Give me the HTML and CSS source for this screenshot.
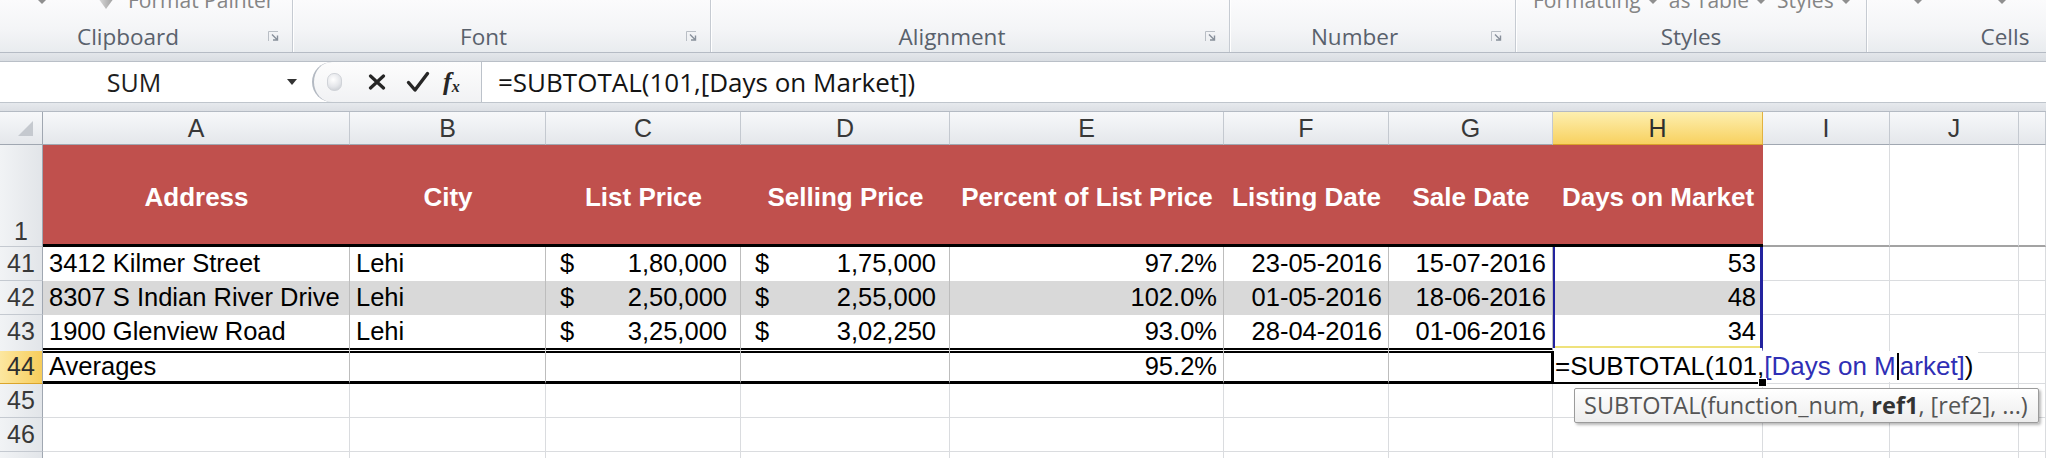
FILE: index.html
```html
<!DOCTYPE html>
<html>
<head>
<meta charset="utf-8">
<title>Excel - Averages</title>
<link rel="stylesheet" href="styles.css">
</head>
<body>
<div class="app">
  <div class="ribbon">
    <div class="group g-clip">
      <div class="gtop">
        <span class="dd"></span>
        <svg class="brush" width="18" height="22" viewBox="0 0 18 22"><defs><linearGradient id="bg1" x1="0" x2="1" y1="0" y2="0"><stop offset="0" stop-color="#dcdcdc"/><stop offset="1" stop-color="#9c9c9c"/></linearGradient></defs><path d="M1 10 L9 3 L17 10 L9 21 Z" fill="url(#bg1)"/></svg>
        <span class="gt fp">Format Painter</span>
      </div>
      <div class="glabel"><span class="lbl">Clipboard</span><span class="launch"><svg width="14" height="13" viewBox="0 0 14 13"><path d="M1.5 11 V1.5 H11" fill="none" stroke="#b9bec5"/><path d="M5 4.5 L10 9.5 M6 10 H10.5 V5.5" fill="none" stroke="#88909b" stroke-width="1.4"/></svg></span></div>
    </div>
    <div class="group g-font">
      <div class="gtop"></div>
      <div class="glabel"><span class="lbl">Font</span><span class="launch"><svg width="14" height="13" viewBox="0 0 14 13"><path d="M1.5 11 V1.5 H11" fill="none" stroke="#b9bec5"/><path d="M5 4.5 L10 9.5 M6 10 H10.5 V5.5" fill="none" stroke="#88909b" stroke-width="1.4"/></svg></span></div>
    </div>
    <div class="group g-align">
      <div class="gtop"></div>
      <div class="glabel"><span class="lbl">Alignment</span><span class="launch"><svg width="14" height="13" viewBox="0 0 14 13"><path d="M1.5 11 V1.5 H11" fill="none" stroke="#b9bec5"/><path d="M5 4.5 L10 9.5 M6 10 H10.5 V5.5" fill="none" stroke="#88909b" stroke-width="1.4"/></svg></span></div>
    </div>
    <div class="group g-num">
      <div class="gtop"></div>
      <div class="glabel"><span class="lbl">Number</span><span class="launch"><svg width="14" height="13" viewBox="0 0 14 13"><path d="M1.5 11 V1.5 H11" fill="none" stroke="#b9bec5"/><path d="M5 4.5 L10 9.5 M6 10 H10.5 V5.5" fill="none" stroke="#88909b" stroke-width="1.4"/></svg></span></div>
    </div>
    <div class="group g-styles">
      <div class="gtop">
        <span class="gt">Formatting</span><span class="dd"></span>
        <span class="gt">as Table</span><span class="dd"></span>
        <span class="gt">Styles</span><span class="dd"></span>
      </div>
      <div class="glabel"><span class="lbl">Styles</span></div>
    </div>
    <div class="group g-cells">
      <div class="gtop"><span class="dd"></span><span class="dd dd2"></span></div>
      <div class="glabel"><span class="lbl">Cells</span></div>
    </div>
  </div>
  <div class="band"></div>
  <div class="fbar">
    <div class="namebox"><span class="nb-text">SUM</span><span class="nb-arrow"></span></div>
    <div class="fcap">
      <span class="grip"></span>
      <svg class="ico-x" width="18" height="16" viewBox="0 0 18 16"><path d="M2.5 2 L15.5 14 M15.5 2 L2.5 14" stroke="#262626" stroke-width="3.2" stroke-linecap="round"/></svg>
      <svg class="ico-ok" width="24" height="22" viewBox="0 0 24 22"><path d="M2.5 11.5 L9 19 L21.5 2.5" fill="none" stroke="#262626" stroke-width="3.4" stroke-linecap="round" stroke-linejoin="round"/></svg>
      <span class="fx">f<sub>x</sub></span>
    </div>
    <div class="finput">=SUBTOTAL(101,[Days on Market])</div>
  </div>
  <div class="band2"></div>

  <div class="sheet">
    <div class="row hdr">
      <div class="corner"><span class="tri"></span></div>
      <div>A</div><div>B</div><div>C</div><div>D</div><div>E</div><div>F</div><div>G</div>
      <div class="sel">H</div><div>I</div><div>J</div><div></div>
    </div>

    <div class="row r1">
      <div class="rh rh1">1</div>
      <div class="th">Address</div>
      <div class="th">City</div>
      <div class="th">List Price</div>
      <div class="th">Selling Price</div>
      <div class="th">Percent of List Price</div>
      <div class="th">Listing Date</div>
      <div class="th">Sale Date</div>
      <div class="th">Days on Market</div>
      <div class="blank"></div><div class="blank"></div><div class="blank"></div>
    </div>

    <div class="row rd">
      <div class="rh">41</div>
      <div class="t">3412 Kilmer Street</div>
      <div class="t">Lehi</div>
      <div class="t acc"><span>$</span><span>1,80,000</span></div>
      <div class="t acc"><span>$</span><span>1,75,000</span></div>
      <div class="t num">97.2%</div>
      <div class="t num">23-05-2016</div>
      <div class="t num">15-07-2016</div>
      <div class="t num ref">53</div>
      <div></div><div></div><div></div>
    </div>

    <div class="row rd band42">
      <div class="rh">42</div>
      <div class="t">8307 S Indian River Drive</div>
      <div class="t">Lehi</div>
      <div class="t acc"><span>$</span><span>2,50,000</span></div>
      <div class="t acc"><span>$</span><span>2,55,000</span></div>
      <div class="t num">102.0%</div>
      <div class="t num">01-05-2016</div>
      <div class="t num">18-06-2016</div>
      <div class="t num ref">48</div>
      <div></div><div></div><div></div>
    </div>

    <div class="row rd r43">
      <div class="rh">43</div>
      <div class="t">1900 Glenview Road</div>
      <div class="t">Lehi</div>
      <div class="t acc"><span>$</span><span>3,25,000</span></div>
      <div class="t acc"><span>$</span><span>3,02,250</span></div>
      <div class="t num">93.0%</div>
      <div class="t num">28-04-2016</div>
      <div class="t num">01-06-2016</div>
      <div class="t num ref last">34</div>
      <div></div><div></div><div></div>
    </div>

    <div class="row r44">
      <div class="rh sel">44</div>
      <div class="t">Averages</div>
      <div class="t"></div>
      <div class="t"></div>
      <div class="t"></div>
      <div class="t num">95.2%</div>
      <div class="t"></div>
      <div class="t"></div>
      <div class="active">
        <span class="edit">=SUBTOTAL(101,<span class="blue">[Days on M<span class="caret"></span>arket]</span>)</span>
        <span class="fillh"></span>
        <div class="tip">SUBTOTAL(function_num, <b>ref1</b>, [ref2], ...)</div>
      </div>
      <div></div><div></div><div></div>
    </div>

    <div class="row re">
      <div class="rh">45</div>
      <div></div><div></div><div></div><div></div><div></div><div></div><div></div><div></div><div></div><div></div><div></div>
    </div>
    <div class="row re">
      <div class="rh">46</div>
      <div></div><div></div><div></div><div></div><div></div><div></div><div></div><div></div><div></div><div></div><div></div>
    </div>
    <div class="row re">
      <div class="rh">47</div>
      <div></div><div></div><div></div><div></div><div></div><div></div><div></div><div></div><div></div><div></div><div></div>
    </div>
  </div>
</div>
</body>
</html>
```

FILE: styles.css
```css
html, body {
  margin: 0;
  padding: 0;
  background: #ffffff;
}
body {
  width: 2046px;
  height: 458px;
  overflow: hidden;
  font-family: "Liberation Sans", Arial, sans-serif;
}
.app {
  width: 2046px;
  height: 458px;
  overflow: hidden;
}

/* ---------- Ribbon ---------- */
.ribbon {
  display: flex;
  height: 52px;
  overflow: hidden;
  background: linear-gradient(#fbfbfc 0%, #f4f5f7 55%, #e9ecef 100%);
  border-bottom: 1px solid #b5bbc4;
  font-family: "Open Sans", "Noto Sans", sans-serif;
}
.group {
  flex: none;
  box-sizing: border-box;
  display: flex;
  flex-direction: column;
  border-right: 1px solid #c6cbd2;
  box-shadow: 1px 0 0 #ffffff;
}
.g-clip { width: 293px; }
.g-font { width: 418px; }
.g-align { width: 519px; }
.g-num { width: 286px; }
.g-styles { width: 351px; }
.g-cells { width: 276px; border-right: none; }

.gtop {
  display: flex;
  align-items: flex-start;
  height: 22px;
  margin-top: -11px;
  font-size: 21px;
  line-height: 22px;
  color: #858585;
  white-space: nowrap;
}
.gt { display: inline-block; }
.dd {
  flex: none;
  width: 0;
  height: 0;
  margin-top: 11px;
  border-left: 4px solid transparent;
  border-right: 4px solid transparent;
  border-top: 4px solid #8f8f8f;
}
.g-clip .gtop { padding-left: 38px; }
.g-clip .brush { margin-left: 51px; margin-top: -1px; flex: none; }
.g-clip .fp { margin-left: 13px; }
.g-styles .gtop { padding-left: 17px; }
.g-styles .gtop .dd { margin-left: 8px; margin-right: 12px; }
.g-cells .gtop { padding-left: 47px; }
.g-cells .dd2 { margin-left: 76px; }

.glabel {
  margin-top: auto;
  margin-bottom: 2px;
  height: 28px;
  display: flex;
  align-items: center;
}
.lbl {
  flex: 1;
  text-align: center;
  font-size: 22.5px;
  color: #59616c;
  white-space: nowrap;
}
.launch {
  flex: none;
  width: 14px;
  height: 13px;
  margin: 0 11px 0 11px;
  display: flex;
}

.band {
  height: 8px;
  background: linear-gradient(#e3e6ea, #d9dde2);
  border-bottom: 1px solid #b9bfc7;
}

/* ---------- Formula bar ---------- */
.fbar {
  display: flex;
  height: 40px;
  background: #ffffff;
  border-bottom: 1px solid #bfc5cc;
  font-family: "Open Sans", "Noto Sans", sans-serif;
}
.namebox {
  flex: none;
  width: 305px;
  display: flex;
  align-items: center;
}
.nb-text {
  width: 268px;
  text-align: center;
  font-size: 25px;
  color: #1e1e1e;
}
.nb-arrow {
  margin-left: 19px;
  width: 0;
  height: 0;
  border-left: 5px solid transparent;
  border-right: 5px solid transparent;
  border-top: 6px solid #333333;
}
.fcap {
  flex: none;
  box-sizing: border-box;
  width: 169px;
  margin-left: 7px;
  height: 40px;
  display: flex;
  align-items: center;
  border-left: 2px solid #b3b9c2;
  border-radius: 20px 0 0 20px;
  background: linear-gradient(#fdfdfd, #f1f2f4);
}
.grip {
  flex: none;
  width: 13px;
  height: 16px;
  margin-left: 13px;
  border-radius: 7px;
  background: radial-gradient(circle at 40% 35%, #ffffff 0%, #e4e6ea 55%, #c3c7cd 100%);
  border: 1px solid #d0d3d8;
}
.ico-x { flex: none; margin-left: 26px; }
.ico-ok { flex: none; margin-left: 20px; }
.fx {
  flex: none;
  margin-left: 13px;
  font-family: "Liberation Serif", "DejaVu Serif", serif;
  font-style: italic;
  font-weight: bold;
  font-size: 26px;
  color: #262626;
  line-height: 1;
}
.fx sub {
  font-size: 16px;
  vertical-align: -2px;
}
.finput {
  flex: 1;
  border-left: 1px solid #bcc2ca;
  padding-left: 16px;
  font-size: 26px;
  line-height: 40px;
  color: #141414;
  white-space: nowrap;
}

.band2 {
  height: 8px;
  background: linear-gradient(#e6e9ed, #dcdfe4);
  border-bottom: 1px solid #b4bac3;
}

/* ---------- Sheet ---------- */
.sheet {
  font-size: 25.5px;
  color: #000000;
}
.row {
  display: grid;
  grid-template-columns: 43px 307px 196px 195px 209px 274px 165px 164px 210px 127px 129px 1fr;
}
.row > div {
  box-sizing: border-box;
  border-right: 1px solid #dadcdf;
  border-bottom: 1px solid #dadcdf;
  white-space: nowrap;
  min-width: 0;
}

/* column headers */
.hdr { height: 33px; }
.hdr > div {
  background: linear-gradient(#f7f8fa, #e4e7eb);
  border-right-color: #c4c9d0;
  border-bottom-color: #a0a7b1;
  color: #383838;
  text-align: center;
  line-height: 32px;
  font-size: 25px;
}
.hdr > div.sel {
  background: linear-gradient(#fdefb0, #f8d160);
  border-right-color: #e2b240;
  border-bottom-color: #d9a22a;
  color: #2e2e2e;
}
.hdr > .corner {
  position: relative;
  border-right-color: #a0a7b1;
}
.tri {
  position: absolute;
  right: 9px;
  bottom: 8px;
  width: 0;
  height: 0;
  border-left: 15px solid transparent;
  border-bottom: 15px solid #c5c9cf;
}

/* row headers */
.row > .rh {
  background: linear-gradient(90deg, #f1f3f5, #e2e5e9);
  border-right-color: #a0a7b1;
  border-bottom-color: #c4c9d0;
  color: #383838;
  text-align: center;
  font-size: 25px;
}
.row > .rh.sel {
  background: linear-gradient(90deg, #fce7a0, #f7cd5b);
  border-bottom-color: #dba52c;
  color: #2e2e2e;
}

/* header row (row 1) */
.r1 { height: 102px; }
.row > .rh1 {
  display: flex;
  align-items: flex-end;
  justify-content: center;
  line-height: 30px;
}
.row > .th {
  background: #c0504d;
  color: #ffffff;
  font-weight: bold;
  font-size: 26px;
  display: flex;
  align-items: center;
  justify-content: center;
  border-right: none;
  border-bottom: 3px solid #000000;
  padding-top: 6px;
}
.row > .blank {
  border-bottom: 2px solid #a3a3a3;
}

/* table body */
.rd { height: 34px; line-height: 33px; }
.rd.r43 { height: 36px; }
.r44 { height: 33px; line-height: 30px; }
.re { height: 34px; line-height: 33px; }

.row > .t {
  padding: 0 6px 0 6px;
  border-right-color: #bdbdbd;
  border-bottom: none;
}
.band42 > .t { background: #d9d9d9; }
.row > .num { text-align: right; }
.row > .acc {
  display: flex;
  justify-content: space-between;
  padding: 0 13px 0 14px;
}
.row > .ref {
  box-shadow: inset 2px 0 0 #23239e, inset -2px 0 0 #23239e;
  border-right-color: #23239e;
}
.r43 > .t { border-bottom: 5px double #000000; }
.r43 > .ref.last {
  border-bottom: 5px solid transparent;
  background: linear-gradient(to top, #efe27c 0, #efe27c 2px, #ffffff 2px);
}
.r44 > .t { border-bottom: 3px solid #000000; }

/* active cell in edit mode */
.row > .active {
  position: relative;
  border-left: 3px solid #000000;
  border-right: 1px solid #000000;
  border-bottom: 2px solid #000000;
  margin-left: -2px;
}
.edit {
  position: absolute;
  left: 0;
  top: 0;
  bottom: 0;
  z-index: 2;
  padding: 0 4px 0 1px;
  background: #ffffff;
  white-space: nowrap;
  color: #000000;
  font-size: 26px;
}
.blue { color: #2f2fb5; }
.caret {
  display: inline-block;
  width: 2px;
  height: 27px;
  margin: 0 1px;
  background: #000000;
  vertical-align: -5px;
}
.fillh {
  position: absolute;
  right: -5px;
  bottom: -5px;
  width: 7px;
  height: 7px;
  background: #000000;
  border: 1px solid #ffffff;
  z-index: 3;
}
.tip {
  position: absolute;
  left: 20px;
  top: 37px;
  z-index: 4;
  box-sizing: border-box;
  width: 465px;
  height: 35px;
  padding: 0 9px;
  border: 1px solid #9b9b9b;
  border-radius: 2px;
  background: linear-gradient(#ffffff, #ededed);
  box-shadow: 2px 2px 3px rgba(0, 0, 0, 0.28);
  font-family: "Open Sans", "Noto Sans", sans-serif;
  font-size: 23.5px;
  line-height: 32px;
  color: #555555;
  white-space: nowrap;
}
.tip b { color: #333333; }
```
